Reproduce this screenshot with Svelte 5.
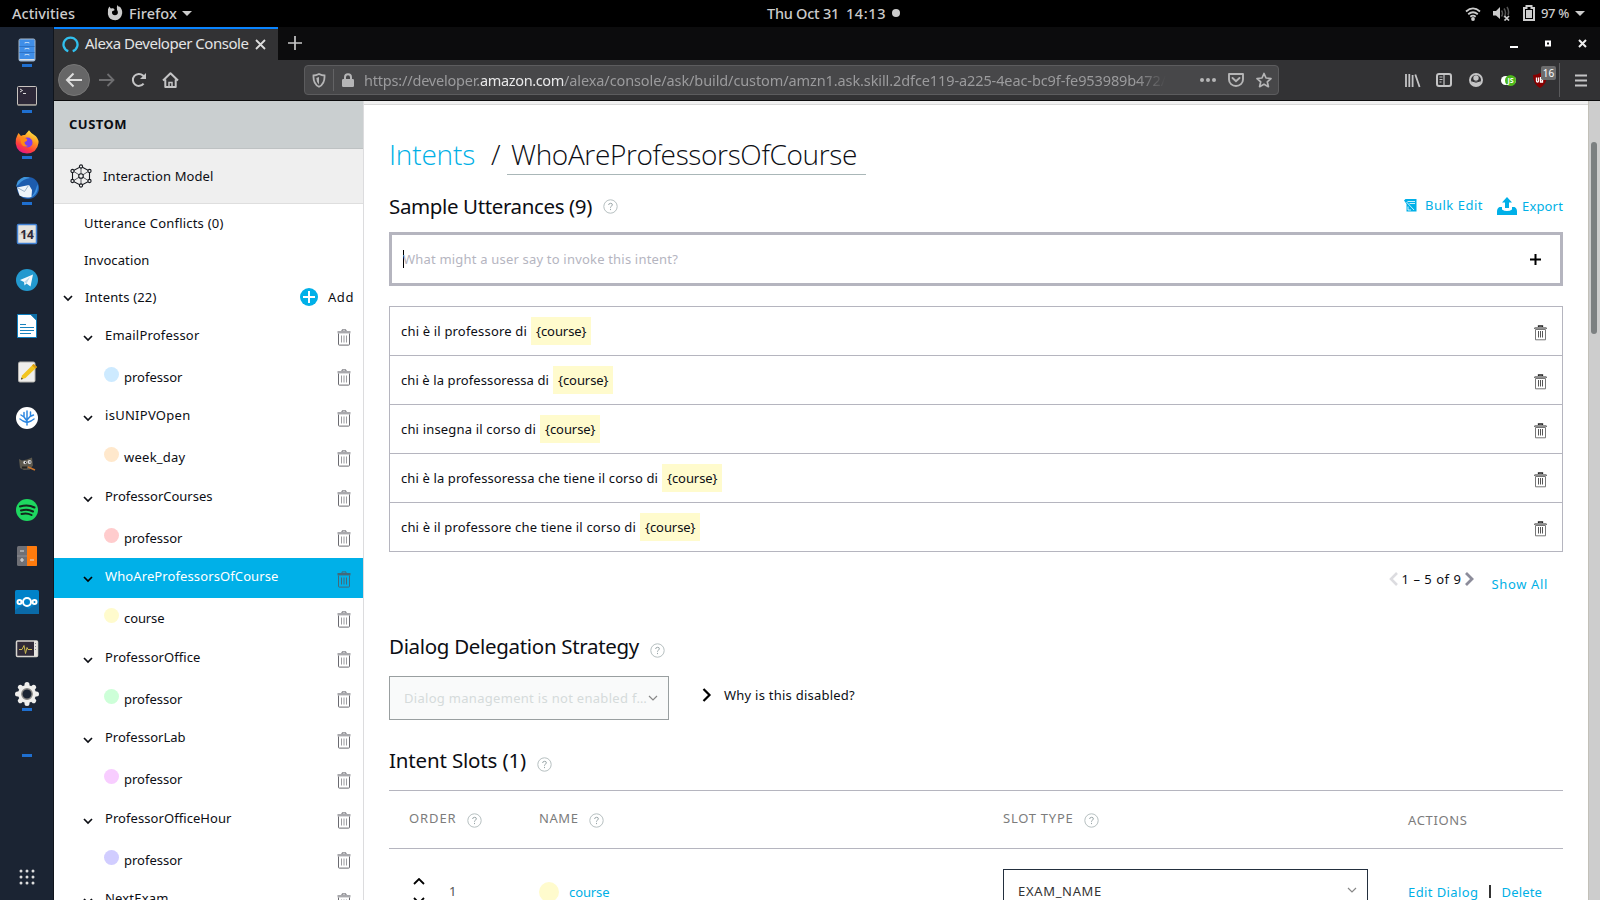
<script>
  // Spreads or tightens the tracking of a label until it fills the given width.
  function fit(node, width) {
    const natural = node.getBoundingClientRect().width;
    const count = node.textContent.length;
    node.style.letterSpacing = `${(width - natural) / count}px`;
  }

  const dock = [
    { icon: 'files', on: true }, { icon: 'terminal', on: true }, { icon: 'firefox', on: true },
    { icon: 'mail', on: true }, { icon: 'calendar' }, { icon: 'telegram' }, { icon: 'writer' },
    { icon: 'notes' }, { icon: 'coral' }, { icon: 'gimp' }, { icon: 'spotify' }, { icon: 'calc' },
    { icon: 'cloud' }, { icon: 'monitor' }, { icon: 'gear', on: true }, { icon: 'none', on: true }
  ];

  const intents = [
    { name: 'EmailProfessor', w: 94.5, slot: 'professor', sw: 58.5, color: '#cdeaff' },
    { name: 'isUNIPVOpen', w: 85.5, slot: 'week_day', sw: 61.5, color: '#ffe8cc' },
    { name: 'ProfessorCourses', w: 107.5, slot: 'professor', sw: 58.5, color: '#ffcccd' },
    { name: 'WhoAreProfessorsOfCourse', w: 173.5, slot: 'course', sw: 40.5, color: '#fffbcd', active: true },
    { name: 'ProfessorOffice', w: 95.5, slot: 'professor', sw: 58.5, color: '#cdffd8' },
    { name: 'ProfessorLab', w: 80.5, slot: 'professor', sw: 58.5, color: '#f8cdff' },
    { name: 'ProfessorOfficeHour', w: 126.5, slot: 'professor', sw: 58.5, color: '#d1cdff' },
    { name: 'NextExam', w: 63.5 }
  ];

  const utterances = [
    { text: 'chi è il professore di', w: 126 },
    { text: 'chi è la professoressa di', w: 148 },
    { text: 'chi insegna il corso di', w: 135 },
    { text: 'chi è la professoressa che tiene il corso di', w: 257 },
    { text: 'chi è il professore che tiene il corso di', w: 235 }
  ];
</script>

{#snippet trash()}
  <svg class="trash" width="14" height="17" viewBox="0 0 14 17" fill="none" stroke="currentColor">
    <path d="M5 2V.9h4V2" />
    <path class="lid" d="M.5 3.2h13" stroke-width="2.4" />
    <path d="M1.500 4.500v10.800q0 .8.8.8h9.400q.8 0 .8-.8V4.500" />
    <path class="ribs" d="M4.500 6.500v7M7 6.500v7M9.500 6.500v7" />
  </svg>
{/snippet}

{#snippet smallTrash()}
  <svg class="trash" width="13" height="16" viewBox="0 0 13 16" fill="none" stroke="currentColor">
    <path d="M4.500 2V1h4v1" stroke-width="1.300" />
    <path d="M.5 3.500V3h12v.5" stroke-width="1" />
    <path d="M1.500 4.500h10v10.300h-10z" stroke="#777" />
    <path class="ribs" d="M4.500 6v6.500M6.500 6v6.500M8.500 6v6.500" stroke-width=".9" />
  </svg>
{/snippet}

{#snippet help()}
  <svg class="help" width="15" height="15" viewBox="0 0 15 15">
    <circle cx="7.5" cy="7.5" r="6.7" fill="none" stroke="#b6bfc0" />
    <path d="M5.600 6Q5.700 4.300 7.600 4.300 9.500 4.400 9.400 5.900 9.300 6.800 8.300 7.200 7.500 7.600 7.500 8.700M7.500 9.900v1.200" fill="none" stroke="#9aa6a8" />
  </svg>
{/snippet}

{#snippet chev()}
  <svg class="chev" width="10" height="7" viewBox="0 0 10 7"><path d="M1 1l4 4 4-4" fill="none" stroke="currentColor" /></svg>
{/snippet}

<div class="screen">
  <header class="top">
    <span class="t act" use:fit={63}>Activities</span>
    <svg class="fox" width="16" height="16" viewBox="0 0 16 16"><path fill="#ccc" d="M1 4.200L2.300 1.500 3.800 3.600Q5 3 6.300 3.200L7.800 5 5 6.500Q4.500 8.500 6 9.800 8.500 11 10.600 9 11.500 7 10 4.800 9.200 2.500 10.500 0 11.300 1.500 12.300 2.300L12.400 1.200Q15.500 4 15.200 8.200 14.200 14.700 8.200 15.200 2 15 .9 9.200Z" /></svg>
    <span class="t ff" use:fit={48}>Firefox</span>
    <i class="tri"></i>
    <span class="t date" use:fit={72}>Thu Oct 31</span>
    <span class="t clock" use:fit={40}>14:13</span>
    <i class="bullet"></i>
    <svg class="wifi" width="16" height="14" viewBox="0 0 16 14" fill="none" stroke="#ccc" stroke-width="1.800"><path d="M1 4.500Q8-1.700 15 4.500M3.200 7.200Q8 3.200 12.800 7.200M5.300 9.700Q8 7.600 10.700 9.700" /><circle cx="8" cy="12" r="1.900" fill="#ccc" stroke="none" /></svg>
    <svg class="vol" width="17" height="15" viewBox="0 0 17 15"><path d="M0 5h3l4-4v12L3 9.500H0z" fill="#ccc" /><path d="M8.500 4.500q2 3 0 6M11 2.500q3 4 0 9M14 1q2.500 4 1 8" fill="none" stroke="#555" stroke-width="1.500" /><path d="M11.500 10l4.500 4.500M16 10l-4.500 4.500" stroke="#ccc" stroke-width="1.700" /></svg>
    <svg class="bat" width="12" height="16" viewBox="0 0 12 16"><path d="M1 3h2.500V1h5v2H11v12H1z" fill="none" stroke="#ccc" stroke-width="2" /><path d="M3 5h6v8H3z" fill="#ccc" /></svg>
    <span class="t pct" use:fit={28}>97 %</span>
    <i class="tri"></i>
  </header>

  <div class="desk">
    <nav class="dock">
      {#each dock as d}
        <div class="slot">
          <svg width="24" height="24" viewBox="0 0 24 24">
            {#if d.icon === 'files'}
              <rect x="4" y="1" width="16" height="22" rx="1.500" fill="#3f8ee8" stroke="#a9b8c9" />
              <path d="M4.500 21h15v1q0 .5-.5.5H5q-.5 0-.5-.5z" fill="#dde2e7" />
              <path d="M4.500 8.500h15M4.500 14.500h15" stroke="#2f73c5" />
              <path d="M10 5.500v-1h4v1M10 11.500v-1h4v1M10 17.500v-1h4v1" fill="none" stroke="#b7d3f2" />
            {:else if d.icon === 'terminal'}
              <rect x="2.500" y="2.500" width="19" height="18.500" rx="1" fill="#2d2838" stroke="#c8c4c0" />
              <path d="M2.500 20.800h19" stroke="#9c9792" stroke-width="1.500" />
              <path d="M5 5l2.500 1.500L5 8M8 9.500h3" fill="none" stroke="#ddd" />
            {:else if d.icon === 'firefox'}
              <defs><linearGradient id="fx" x1=".8" y1="0" x2=".3" y2="1"><stop offset="0" stop-color="#fff14f" /><stop offset=".4" stop-color="#ff9a1f" /><stop offset=".75" stop-color="#ff3d3d" /><stop offset="1" stop-color="#e3148c" /></linearGradient></defs>
              <path d="M2 6l1.500-3 2.500 3q2-1.500 4-1l4-4.800Q16 3 18.500 4.500 24 8 23.500 13 22 23 12 23.500 2 23 .7 13.500.2 9 2 6z" fill="url(#fx)" />
              <circle cx="12.500" cy="12.500" r="5" fill="#7a3df0" /><path d="M5 7.500q4-1 7 1.500 1 2-2.500 3Q9.500 15 13 16 8 18 6 13z" fill="#ff8a16" />
            {:else if d.icon === 'mail'}
              <circle cx="13" cy="12" r="11" fill="#1d5cae" /><path d="M1 11Q2 3 9 1q4-.5 6 1Q8 3 4 8z" fill="#3f95dc" /><path d="M22.500 8q2 10-7.500 14 5-4 7.500-14z" fill="#3c91e0" />
              <path d="M2 11.500L14 9l3 5-.5 7q-7 1.500-12-1.500z" fill="#eef4fa" /><path d="M3 12l6.500 3.500L13.500 9.500" fill="none" stroke="#9eb3c8" />
            {:else if d.icon === 'calendar'}
              <rect x="2.500" y="2.500" width="19" height="19" rx="1" fill="#e6e4df" stroke="#4181d4" stroke-width="1.500" /><path d="M4 12h16" stroke="#bbb" />
              <text x="12" y="16.500" text-anchor="middle" font-family="Noto Sans" font-size="12" font-weight="700" fill="#2d2838">14</text>
            {:else if d.icon === 'telegram'}
              <circle cx="12" cy="12" r="11" fill="#2399cf" /><path d="M5 12l13-5.500-2.500 12-4-3-2 2-.5-3.500z" fill="#f4fafd" /><path d="M9 14l6-5-3.500 6.500" fill="#b9d9ea" />
            {:else if d.icon === 'writer'}
              <path d="M2.500.5H16l5.500 5.500v17.500h-19z" fill="#fff" stroke="#0e7fc0" /><path d="M15 0h7v7z" fill="#0e6ea6" /><path d="M5 10.500h6M5 13.500h14M5 16.500h14M5 19.500h11" stroke="#1a83bd" />
            {:else if d.icon === 'notes'}
              <rect x="3.500" y="2" width="16.500" height="20" rx="1.500" fill="#efeeec" stroke="#b6b4b0" /><path d="M6 19.500l1-4L18.500 4l3.500 3L10.500 18z" fill="#f2c51f" /><path d="M18.500 4l3.500 3-1.500 1.500-3.500-3z" fill="#d99a12" /><path d="M6 19.500l.5-2 1.500 1.500z" fill="#333" />
            {:else if d.icon === 'coral'}
              <circle cx="12" cy="12" r="11" fill="#fff" /><path d="M12 19v-5M12 15l-3-4V6.500M9 11L6 9M12 14l3.500-4V6M15 10.500L18.500 9M12 13V5M8 15l-3-2M8 15l4 1.500M16 15l3-2M16 15l-4 1.500" fill="none" stroke="#2c86e0" stroke-width="1.500" stroke-linecap="round" />
            {:else if d.icon === 'gimp'}
              <path d="M4 7l3 1.500 5-1 5-2 1 8-3 4-6 .5-4-2z" fill="#5d594e" /><circle cx="10" cy="10.500" r="1.700" fill="#ddd" /><circle cx="14.500" cy="10" r="2" fill="#ddd" /><path d="M10 10.500h1M14.500 10h1" stroke="#111" stroke-width="1.300" /><path d="M13 15l7 3" stroke="#c8742c" stroke-width="1.500" /><path d="M7 15.500h5" stroke="#24231f" stroke-width="2" />
            {:else if d.icon === 'spotify'}
              <circle cx="12" cy="12" r="11" fill="#1ed760" /><path d="M5 8.500q8-2.500 14.500 1M6 12.500q6.500-2 12 1M6.500 16q5.500-1.500 10 1" fill="none" stroke="#13251c" stroke-width="2" stroke-linecap="round" />
            {:else if d.icon === 'calc'}
              <rect x="2" y="2" width="20" height="20" rx="1.500" fill="#6f7076" /><path d="M12 2h9q1 0 1 1v18q0 1-1 1h-9z" fill="#ff7b0d" /><path d="M2 12h10" stroke="#8f8f95" /><path d="M5 7h4M5 16h4M7 14v4M15 16h4" stroke="#ddd" stroke-width="1.200" />
            {:else if d.icon === 'cloud'}
              <rect width="24" height="24" rx="1.500" fill="#0082c9" /><path d="M0 20l8-5 6 4 10-7v12H0z" fill="#0a6aa8" /><g fill="none" stroke="#fff" stroke-width="2"><circle cx="12" cy="12" r="4" /><circle cx="4.500" cy="12" r="2" /><circle cx="19.500" cy="12" r="2" /></g>
            {:else if d.icon === 'monitor'}
              <rect x="1.500" y="5" width="21" height="15.500" rx="1" fill="#2f2a38" stroke="#d8d5d0" stroke-width="1.500" /><path d="M19 5h3v15h-3z" fill="#e6e4e0" /><path d="M20.500 7v7" stroke="#8b8890" stroke-dasharray="1 2" /><path d="M4 13.500h3l2-4 1.500 8 1.500-6 1 2h4" fill="none" stroke="#c9b94e" />
            {:else if d.icon === 'gear'}
              <g stroke="#f0efed" stroke-width="5" stroke-linecap="round"><path d="M12 2.500v19M2.500 12h19M5.300 5.300l13.400 13.400M18.700 5.300L5.300 18.700" /></g><circle cx="12" cy="12" r="9" fill="#f0efed" /><circle cx="12" cy="12" r="5.200" fill="#1b2433" stroke="#8a8886" stroke-width="1.400" />
            {/if}
          </svg>
          {#if d.on}<i class="ind"></i>{/if}
        </div>
      {/each}
      <svg class="apps" width="16" height="16" viewBox="0 0 16 16" fill="#ddd">
        {#each [2, 8, 14] as y}{#each [2, 8, 14] as x}<circle cx={x} cy={y} r="1.500" />{/each}{/each}
      </svg>
    </nav>

    <div class="win">
      <div class="tabs">
        <div class="tab">
          <svg width="17" height="17" viewBox="0 0 17 17"><path d="M6.300 15.200A7 7 0 1 1 10.700 15.200" fill="none" stroke="#31c0ee" stroke-width="2.300" /></svg>
          <span class="t" use:fit={163.5}>Alexa Developer Console</span>
          <svg class="x" width="11" height="11" viewBox="0 0 11 11"><path d="M1 1l9 9M10 1l-9 9" stroke="#ddd" stroke-width="1.800" /></svg>
        </div>
        <svg class="new" width="14" height="14" viewBox="0 0 14 14"><path d="M7 0v14M0 7h14" stroke="#c8c8c8" stroke-width="1.700" /></svg>
        <svg class="ctl" width="78" height="10" viewBox="0 0 78 10"><path d="M0 7h8v2H0zM35 1.500h6v6h-6zm2 2v2h2v-2z" fill="#fff" fill-rule="evenodd" /><path d="M69 1l7 7M76 1l-7 7" stroke="#eee" stroke-width="2" /></svg>
      </div>

      <div class="bar">
        <span class="back"><svg width="18" height="16" viewBox="0 0 18 16"><path d="M17 8H2M8.500 1.500L2 8l6.500 6.500" fill="none" stroke="#ddd" stroke-width="2" /></svg></span>
        <svg class="fwd" width="16" height="14" viewBox="0 0 16 14"><path d="M0 7h14M8.500 1L14.500 7l-6 6" fill="none" stroke="#6e6e70" stroke-width="1.800" /></svg>
        <svg class="rel" width="16" height="16" viewBox="0 0 16 16"><path d="M12.600 11.600A6 6 0 1 1 12 3.500L13.500 5" fill="none" stroke="#c4c4c5" stroke-width="2" /><path d="M15 1v6H9z" fill="#c4c4c5" /></svg>
        <svg class="home" width="17" height="16" viewBox="0 0 17 16"><path d="M1 8.500L8.500 1.300 16 8.500M3.300 7.500V15h10.400V7.500" fill="none" stroke="#c4c4c5" stroke-width="2" stroke-linejoin="round" /><path d="M7 14.500v-4h3v4" fill="none" stroke="#c4c4c5" stroke-width="1.500" /></svg>
        <div class="url">
          <svg class="shield" width="14" height="15" viewBox="0 0 14 15"><path d="M7 1q3 1.500 5.500 1.500Q13 11 7 13.800 1 11 1.500 2.500 4 2.500 7 1z" fill="none" stroke="#b5b5b6" stroke-width="1.800" /><path d="M7 4v7.500Q4.500 9.500 4.300 5z" fill="#b5b5b6" /></svg>
          <i class="sep"></i>
          <svg class="lock" width="12" height="14" viewBox="0 0 12 14"><path d="M3 7V4.300a3 3 0 0 1 6 0V7" fill="none" stroke="#b5b5b6" stroke-width="2" /><rect y="6" width="12" height="8" rx="1.200" fill="#b5b5b6" /></svg>
          <div class="addr"><span class="t" use:fit={116}>https://developer.</span><span class="t host" use:fit={84}>amazon.com</span><span class="t" use:fit={602}>/alexa/console/ask/build/custom/amzn1.ask.skill.2dfce119-a225-4eac-bc9f-fe953989b472/</span></div>
          <svg class="dots" width="16" height="4" viewBox="0 0 16 4" fill="#b5b5b6"><circle cx="2" cy="2" r="2" /><circle cx="8" cy="2" r="2" /><circle cx="14" cy="2" r="2" /></svg>
          <svg class="pocket" width="16" height="14" viewBox="0 0 16 14"><path d="M1 1h14v5.500a7 6.500 0 0 1-14 0z" fill="none" stroke="#b5b5b6" stroke-width="1.900" stroke-linejoin="round" /><path d="M4.500 5L8 8.300 11.500 5" fill="none" stroke="#b5b5b6" stroke-width="1.900" stroke-linecap="round" /></svg>
          <svg class="star" width="16" height="16" viewBox="0 0 16 16"><path d="M8 1.500l2 4.500 5 .5-3.700 3.300 1.100 4.900L8 12.200l-4.400 2.500 1.100-4.900L1 6.500 6 6z" fill="none" stroke="#b5b5b6" stroke-width="1.700" stroke-linejoin="round" /></svg>
        </div>
        <svg class="lib" width="16" height="15" viewBox="0 0 16 15"><path d="M1 1v13M4.300 1v13M7.600 2v12M10.300 1.500L14.600 14" stroke="#c4c4c5" stroke-width="1.800" /></svg>
        <svg class="sb" width="16" height="14" viewBox="0 0 16 14"><rect x="1" y="1" width="14" height="12" rx="2" fill="none" stroke="#c4c4c5" stroke-width="2" /><path d="M8 1v12M3.500 4h3M3.500 6.500h3M3.500 9h2" stroke="#c4c4c5" stroke-width="1.200" /></svg>
        <svg class="acc" width="14" height="14" viewBox="0 0 14 14"><circle cx="7" cy="7" r="6" fill="none" stroke="#c4c4c5" stroke-width="2" /><circle cx="7" cy="5" r="2.700" fill="#c4c4c5" /><path d="M2 8.500h10Q11 12.500 7 12.800 3 12.500 2 8.500z" fill="#c4c4c5" /><path d="M3.500 8.200q3.500 2 7 0" fill="none" stroke="#323234" /></svg>
        <span class="js"><b>JS</b></span>
        <span class="ub"><svg width="14" height="15" viewBox="0 0 14 15"><path d="M7 0q3 2 7 2 0 9-7 13Q0 11 0 2 4 2 7 0z" fill="#850000" /><path d="M3.500 4.500V8q0 1 1 1t1-1V4.500M7.500 4v5h2V6.500h-2" fill="none" stroke="#fff" stroke-width="1.300" /></svg><em>16</em></span>
        <i class="bar-sep"></i>
        <svg class="menu" width="12" height="13" viewBox="0 0 12 13"><path d="M0 1.500h12M0 6.500h12M0 11.500h12" stroke="#c4c4c5" stroke-width="2" /></svg>
      </div>

      <div class="page">
        <aside>
          <div class="custom"><span class="t" use:fit={58}>CUSTOM</span></div>
          <div class="model">
            <svg width="22" height="24" viewBox="0 0 22 24" fill="none" stroke="#16191f" stroke-width="1.100"><path d="M11 2.500l8.500 4.500v10L11 21.500 2.500 17V7z" /><path d="M11 3v18M3 7l16 10M19 7L3 17" stroke-width=".7" /><g fill="#efefef"><circle cx="11" cy="2.500" r="1.600" /><circle cx="19.500" cy="7" r="1.600" /><circle cx="19.500" cy="17" r="1.600" /><circle cx="11" cy="21.500" r="1.600" /><circle cx="2.500" cy="17" r="1.600" /><circle cx="2.500" cy="7" r="1.600" /><circle cx="11" cy="12" r="2.300" /></g></svg>
            <span class="t" use:fit={110.5}>Interaction Model</span>
          </div>
          <div class="tree">
            <div class="plain"><span class="t" use:fit={139.5}>Utterance Conflicts (0)</span></div>
            <div class="plain"><span class="t" use:fit={65.5}>Invocation</span></div>
            <div class="plain root">
              {@render chev()}
              <span class="t" use:fit={71.5}>Intents (22)</span>
              <svg class="plus" width="18" height="18" viewBox="0 0 18 18"><circle cx="9" cy="9" r="9" fill="#00b0e8" /><path d="M9 3v12M3 9h12" stroke="#fff" stroke-width="2" /></svg>
              <span class="t" use:fit={26}>Add</span>
            </div>
            {#each intents as it}
              <div class="intent" class:active={it.active}>
                {@render chev()}
                <span class="t" use:fit={it.w}>{it.name}</span>
                {@render trash()}
              </div>
              {#if it.slot}
                <div class="child">
                  <i class="dot" style:background={it.color}></i>
                  <span class="t" use:fit={it.sw}>{it.slot}</span>
                  {@render trash()}
                </div>
              {/if}
            {/each}
          </div>
        </aside>

        <main>
          <div class="strip"></div>
          <div class="content">
            <div class="title">
              <span class="t link" use:fit={86}>Intents</span>
              <span class="t slash">/</span>
              <div class="name"><span class="t" use:fit={346}>WhoAreProfessorsOfCourse</span></div>
            </div>

            <div class="head utt">
              <h2 class="t" use:fit={203}>Sample Utterances (9)</h2>
              {@render help()}
              <div class="tools">
                <svg width="13" height="13" viewBox="0 0 13 13"><path d="M0 1.500L1.500 0H12.500v12.500H2.500V5z" fill="#00b0e8" /><path d="M3.500 2.500h7.500M2.500 3l7.500 8M5.500 4.500h5.500M4 7.500v3.500h3" fill="none" stroke="#fff" stroke-width=".8" /></svg>
                <span class="t bulk" use:fit={58}>Bulk Edit</span>
                <svg class="exp" width="20" height="18" viewBox="0 0 20 18" fill="#00b0e8"><path d="M10 0l5 5.500h-3V11H8V5.500H5zM0 18v-3.500Q0 11 2.500 10H5v2.500q2 1.500 5 1.500t5-1.500V10h2.500q2.500 1 2.500 4.500V18z" /></svg>
                <span class="t" use:fit={41}>Export</span>
              </div>
            </div>

            <div class="input">
              <i class="caret"></i><span class="t" use:fit={275}>What might a user say to invoke this intent?</span>
              <svg width="11" height="11" viewBox="0 0 11 11"><path d="M5.500 0v11M0 5.500h11" stroke="#000" stroke-width="2" /></svg>
            </div>

            <div class="list">
              {#each utterances as u}
                <div class="row">
                  <span class="t" use:fit={u.w}>{u.text}</span>
                  <span class="tag"><span class="t" use:fit={50.5}>{'{course}'}</span></span>
                  {@render smallTrash()}
                </div>
              {/each}
            </div>

            <div class="pager">
              <svg width="9" height="14" viewBox="0 0 9 14"><path d="M8 1L2 7l6 6" fill="none" stroke="#dcdce0" stroke-width="2.600" /></svg>
              <span class="t" use:fit={60}>1 – 5 of 9</span>
              <svg width="9" height="14" viewBox="0 0 9 14"><path d="M1 1l6 6-6 6" fill="none" stroke="#8c8c9a" stroke-width="2.800" /></svg>
              <span class="t all" use:fit={56.5}>Show All</span>
            </div>

            <div class="head dlg">
              <h2 class="t" use:fit={250}>Dialog Delegation Strategy</h2>
              {@render help()}
            </div>
            <div class="strategy">
              <div class="disabled"><span class="t" use:fit={243}>Dialog management is not enabled f…</span>{@render chev()}</div>
              <svg width="10" height="14" viewBox="0 0 10 14"><path d="M1.500 1l6 6-6 6" fill="none" stroke="#000" stroke-width="2.200" /></svg>
              <span class="t" use:fit={131}>Why is this disabled?</span>
            </div>

            <div class="head slots">
              <h2 class="t" use:fit={137}>Intent Slots (1)</h2>
              {@render help()}
            </div>
            <div class="grid thead">
              <div><span class="t" use:fit={47.5}>ORDER</span>{@render help()}</div>
              <div><span class="t" use:fit={39.5}>NAME</span>{@render help()}</div>
              <div><span class="t" use:fit={70.5}>SLOT TYPE</span>{@render help()}</div>
              <div class="lower"><span class="t" use:fit={59.5}>ACTIONS</span></div>
            </div>
            <div class="grid tbody">
              <div><span class="sort"><svg width="12" height="7" viewBox="0 0 12 7"><path d="M1 6l5-5 5 5" fill="none" stroke="#000" stroke-width="1.800" /></svg><svg width="12" height="7" viewBox="0 0 12 7"><path d="M1 1l5 5 5-5" fill="none" stroke="#000" stroke-width="1.800" /></svg></span><span class="t num">1</span></div>
              <div><i class="big"></i><span class="t link" use:fit={40.5}>course</span></div>
              <div><span class="select"><span class="t" use:fit={84}>EXAM_NAME</span>{@render chev()}</span></div>
              <div class="ops"><span class="t link" use:fit={70.5}>Edit Dialog</span><i class="pipe"></i><span class="t link" use:fit={40.5}>Delete</span></div>
            </div>
          </div>
        </main>
        <div class="scroll"><i></i></div>
      </div>
    </div>
  </div>
</div>

<style>
  :global(body) { margin: 0; overflow: hidden; }
  .screen, .screen * { box-sizing: border-box; }
  .screen { width: 1600px; height: 900px; overflow: hidden; display: flex; flex-direction: column; font: 450 13px/20px "Noto Sans", "Open Sans", sans-serif; color: #0c0e14; }
  .t { display: inline-block; white-space: nowrap; flex: none; }
  svg { display: block; flex: none; }
  i { display: block; flex: none; }

  .top { height: 27px; flex: none; background: #000; color: #ccc; display: flex; align-items: center; font-size: 14.500px; font-weight: 500; }
  .top .t { margin-top: -2px; }
  .act { margin-left: 12px; }
  .fox { margin-left: 32px; margin-top: -1px; }
  .ff { margin-left: 6px; margin-right: 5px; }
  .tri { border: 5px solid transparent; border-top-color: #ccc; border-bottom: 0; }
  .top .date { margin-left: 575px; }
  .clock { margin-left: 7px; }
  .bullet { width: 8px; height: 8px; border-radius: 50%; background: #ccc; margin: -1px 565px 0 6px; }
  .vol { margin-left: 12px; }
  .bat { margin: -1px 0 0 13px; }
  .pct { margin: 0 6px 0 6px; font-size: 13px; }
  .top .pct { margin-top: -1px; }

  .desk { flex: 1; display: flex; min-height: 0; }
  .dock { width: 54px; background: #1b2433; border-right: 1px solid #10151d; display: flex; flex-direction: column; align-items: center; }
  .slot { height: 46px; width: 53px; flex: none; display: flex; align-items: center; justify-content: center; position: relative; padding-left: 1px; }
  .ind { position: absolute; left: 22px; top: 37px; width: 10px; height: 3px; background: #1f6fd0; }
  .apps { margin: 106px 0 0 1px; }

  .win { flex: 1; display: flex; flex-direction: column; min-width: 0; }
  .tabs { height: 33px; flex: none; background: #0c0c0d; display: flex; align-items: center; }
  .tab { width: 224px; height: 33px; background: #323234; border-top: 2px solid #0a84ff; display: flex; align-items: center; padding: 0 0 1px 8px; color: #e4e4e5; font-size: 15px; font-weight: 400; }
  .tab .t { margin: -2px 0 0 6px; }
  .x { margin-left: 6px; }
  .new { margin: -1px 0 0 10px; }
  .ctl { margin: 1px 12px 0 auto; }

  .bar { height: 41px; flex: none; background: #323234; border-bottom: 1px solid #0c0c0d; display: flex; align-items: center; padding-left: 4px; font-weight: 400; }
  .back { width: 32px; height: 32px; border-radius: 50%; background: #666667; border: 1px solid #777; display: flex; align-items: center; justify-content: center; }
  .fwd { margin-left: 9px; }
  .rel { margin-left: 16px; }
  .home { margin-left: 15px; }
  .url { width: 975px; height: 30px; margin-left: 125px; background: #474749; border: 1px solid #5c5c5e; border-radius: 4px; display: flex; align-items: center; }
  .shield { margin-left: 7px; }
  .sep { width: 1px; height: 22px; background: #636365; margin-left: 7px; }
  .lock { margin-left: 8px; }
  .addr { width: 802px; margin-left: 10px; overflow: hidden; white-space: nowrap; display: flex; font-size: 14.500px; color: #9b9b9d; mask-image: linear-gradient(90deg, #000 772px, transparent 802px); }
  .host { color: #e8e8e9; }
  .dots { margin-left: 34px; }
  .pocket { margin-left: 12px; }
  .star { margin-left: 12px; }
  .lib { margin-left: 126px; }
  .sb { margin-left: 15px; }
  .acc { margin-left: 17px; }
  .js { width: 15px; height: 9px; margin-left: 18px; background: #fff; border-radius: 5px; display: flex; justify-content: flex-end; align-items: center; }
  .js b { width: 11px; height: 11px; flex: none; border-radius: 50%; background: #4cb81c; color: #fff; font-size: 7px; line-height: 11px; text-align: center; }
  .ub { margin-left: 17px; position: relative; }
  .ub em { position: absolute; left: 8px; top: -7px; width: 15px; height: 14px; background: #6c6c6d; border-radius: 2px; color: #fff; font: 10px/14px "Noto Sans", sans-serif; text-align: center; }
  .bar-sep { width: 1px; height: 34px; background: #5a5a5c; margin-left: 12px; }
  .menu { margin-left: 15px; }

  .page { flex: 1; display: flex; min-height: 0; background: #fff; }
  aside { width: 310px; flex: none; border-right: 1px solid #dcdcde; overflow: hidden; }
  .custom { height: 48px; background: #cacfd0; border-bottom: 1px solid #bec2c3; padding: 0 0 1px 15px; display: flex; align-items: center; font-weight: 700; }
  .model { height: 55px; background: #efefef; border-bottom: 1px solid #dedede; display: flex; align-items: center; padding-left: 16px; }
  .model .t { margin-left: 11px; }
  .plain { height: 37px; display: flex; align-items: center; padding-left: 30px; }
  .root { height: 38.500px; padding: 0 0 1px 9px; }
  .root .chev { margin: 4px 12px 0 0; }
  .chev { stroke-width: 1.700; }
  .plus { margin: 0 10px 0 auto; }
  .root .t:last-child { margin-right: 9px; }
  .intent { height: 40px; display: flex; align-items: center; padding: 0 12px 0 29px; }
  .intent .t { margin: -4px 0 0 12px; }
  .intent .chev { margin-top: 3px; }
  .trash { margin-left: auto; color: #6a6a70; }
  .intent .trash, .child .trash { margin-top: 2px; }
  .intent .lid, .child .lid { stroke: #a9a9ad; }
  .ribs { stroke: #9b9b9f; }
  .active { background: #00b0e8; color: #fff; }
  .active .chev { color: #000; }
  .active .trash, .active .trash .lid, .active .ribs { color: #456878; stroke: #456878; }
  .child { height: 40.500px; display: flex; align-items: center; padding: 0 12px 0 50px; }
  .dot { width: 15px; height: 15px; border-radius: 50%; margin: -5px 5px 0 0; }

  main { width: 1224px; flex: none; overflow: hidden; }
  .strip { height: 4px; background: #f0f0f0; border-bottom: 1px solid #d8d8d8; }
  .content { padding: 0 0 0 25px; width: 1199px; }
  .link, .all { color: #00b0e6; }
  .title { height: 41px; margin-top: 29px; display: flex; font-family: "Open Sans", "Noto Sans", sans-serif; font-weight: 300; font-size: 28px; line-height: 40px; }
  .title .slash { margin-left: 16px; width: 16px; }
  .title .name { margin-left: 0; width: 359px; height: 41px; padding-left: 4px; border-bottom: 1px solid #aab7b8; }
  .head { display: flex; align-items: center; }
  h2 { margin: 0; font-size: 20.500px; font-weight: 400; line-height: 28px; }
  .head .help { margin-left: 11px; }
  .utt { height: 57px; padding-top: 5px; }
  .dlg { height: 68px; padding-top: 8px; }
  .slots { height: 70px; padding-top: 10px; }
  .dlg .help, .slots .help { margin-top: 9px; }
  .tools { margin-left: auto; display: flex; align-items: center; color: #00b0e6; }
  .tools > svg:first-child { margin-top: -2px; }
  .bulk { margin: -2px 0 0 8px; }
  .exp { margin: 0 5px 0 14px; }
  .input { height: 54px; border: 3px solid #b5b5bf; display: flex; align-items: center; padding: 0 19px 0 11px; color: #b5b5bf; }
  .input svg { margin: 1px 0 0 auto; }
  .caret { width: 1px; height: 18px; background: #000; margin-right: -1px; }
  .list { margin-top: 20px; border: 1px solid #b5b5bf; border-bottom: 0; }
  .row { height: 49px; border-bottom: 1px solid #b5b5bf; display: flex; align-items: center; padding: 0 15px 0 11px; }
  .row .t { margin-top: -1px; }
  .tag { height: 28px; width: 60px; margin-left: 4px; padding-left: 5px; background: #fffbcd; display: flex; align-items: center; }
  .row .trash { margin-top: 4px; color: #222; }
  .row .ribs { stroke: #444; }
  .pager { height: 56px; display: flex; align-items: center; justify-content: flex-end; padding: 0 15px 2px 0; }
  .pager .t { margin: 0 3px 0 4px; }
  .pager .all { margin: 10px 0 0 18px; }
  .strategy { height: 44px; display: flex; align-items: center; }
  .disabled { width: 280px; height: 44px; border: 1px solid #999fa0; background: #f9fafa; color: #d5dbdb; padding: 0 0 1px 14px; display: flex; align-items: center; }
  .disabled .chev, .select .chev { color: #888; stroke-width: 1.200; }
  .disabled .chev { margin: 2px 0 0 1px; }
  .strategy > svg { margin: -6px 0 0 33px; }
  .strategy > .t { margin: -6px 0 0 12px; }
  .grid { display: grid; grid-template-columns: 150px 464px 405px 1fr; }
  .grid > div { display: flex; align-items: center; }
  .grid > div:first-child { padding-left: 20px; }
  .thead { height: 59px; border: solid #b5b5bf; border-width: 1px 0; color: #7c7c7c; }
  .thead .t { margin-top: -4px; }
  .thead .help { margin: 1px 0 0 10px; }
  .thead .lower .t { margin-top: 0; }
  .tbody { height: 86px; }
  .tbody > div:first-child { padding-bottom: 2px; }
  .sort { margin-left: 4px; display: flex; flex-direction: column; gap: 12px; }
  .num { margin-left: 24px; color: #555; }
  .big { width: 20px; height: 20px; border-radius: 50%; background: #fffbcd; margin-right: 10px; }
  .select { width: 365px; height: 46px; border: 1px solid #232f3e; display: flex; align-items: center; justify-content: space-between; padding: 0 10px 3px 14px; color: #333; }
  .ops { padding-bottom: 1px; }
  .pipe { width: 2px; height: 13px; background: #333; margin: 0 11px 0 10px; }
  .scroll { width: 12px; background: #cdcdcd; border-left: 1px solid #c2c0b8; padding: 41px 0 0 2px; }
  .scroll i { width: 6px; height: 192px; border-radius: 3px; background: #7c8081; }
</style>
